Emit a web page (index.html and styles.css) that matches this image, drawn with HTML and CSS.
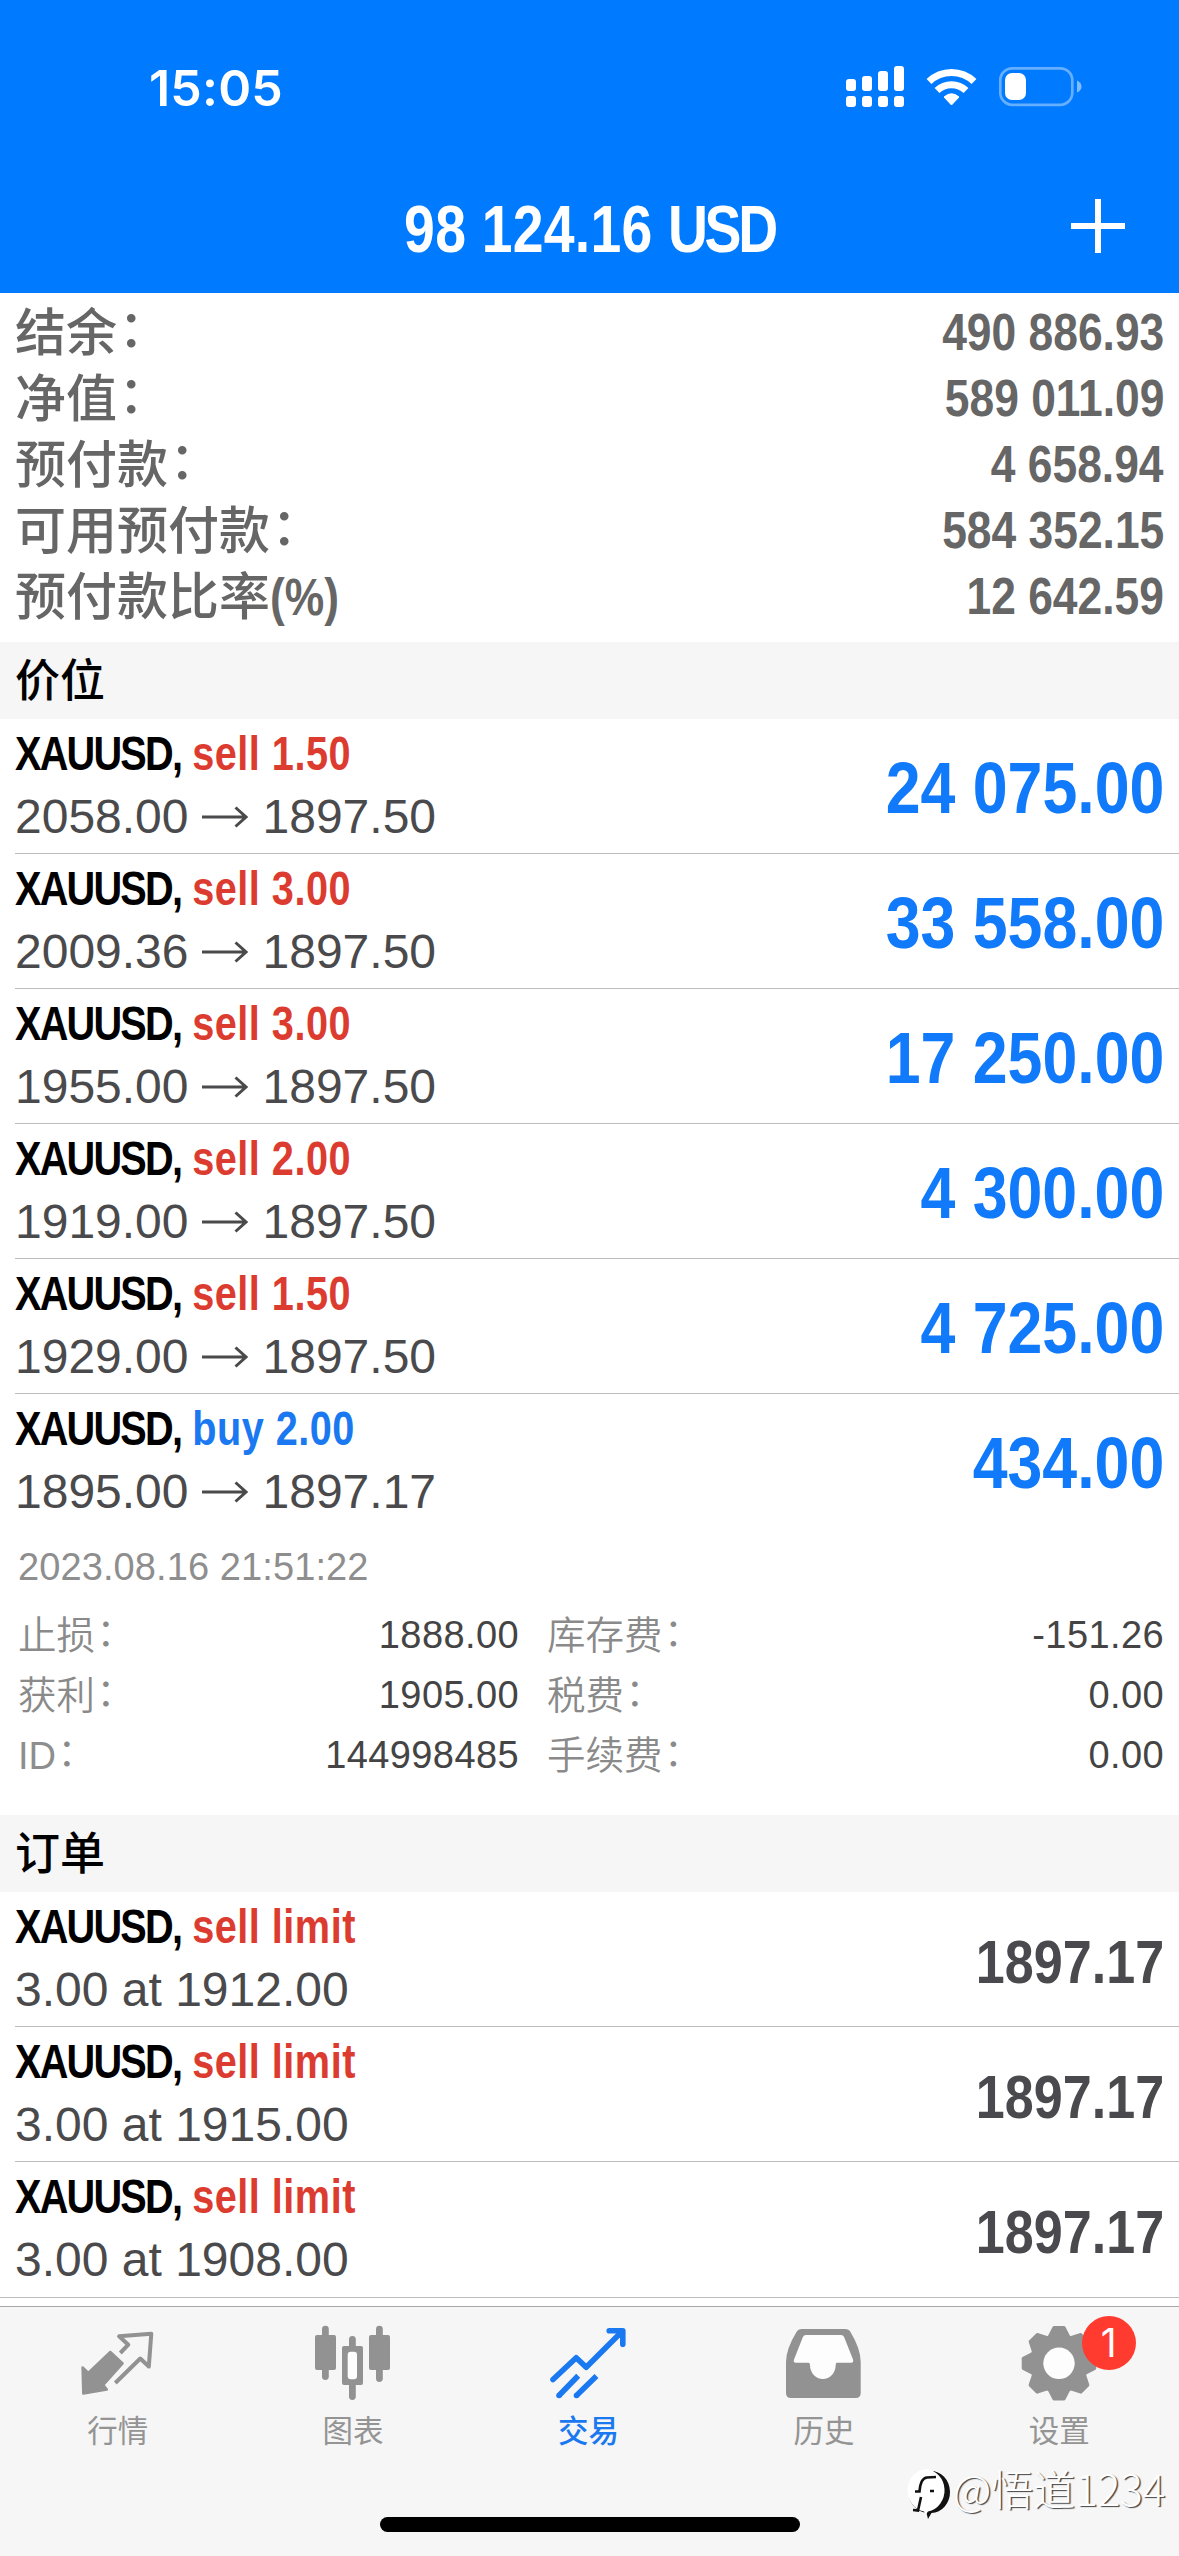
FILE: index.html
```html
<!DOCTYPE html>
<html lang="zh-CN">
<head>
<meta charset="utf-8">
<title>交易</title>
<link rel="stylesheet" href="styles.css">
</head>
<body>
<div class="screen">
  <header class="header">
    <div class="status">
      <span class="clock">15:05</span>
      <svg class="status-icons" viewBox="846 66 236 44" width="236" height="44">
        <g fill="#fff">
          <rect x="846" y="80" width="10" height="12" rx="3"/>
          <rect x="862" y="77" width="10" height="15" rx="3"/>
          <rect x="878" y="72" width="10" height="20" rx="3"/>
          <rect x="894" y="67" width="10" height="25" rx="3"/>
          <rect x="846" y="97" width="10" height="11" rx="3"/>
          <rect x="862" y="97" width="10" height="11" rx="3"/>
          <rect x="878" y="97" width="10" height="11" rx="3"/>
          <rect x="894" y="97" width="10" height="11" rx="3"/>
          <path d="M944 98 Q951.500 91.500 959 98 L951.500 106 Z" stroke="#fff" stroke-width="1" stroke-linejoin="round"/>
          <rect x="1005" y="74" width="21" height="27" rx="7"/>
        </g>
        <g fill="none" stroke="#fff" stroke-width="7">
          <path d="M929 82.500 A32.500 32.500 0 0 1 974 82.500"/>
          <path d="M937 91.500 A21 21 0 0 1 966 91.500"/>
        </g>
        <rect x="1000.300" y="69.300" width="72" height="36.500" rx="12" fill="none" stroke="#fff" stroke-opacity=".4" stroke-width="2.700"/>
        <path d="M1077 81.500 Q1081.500 83.500 1081.500 87.500 Q1081.500 91.500 1077 93.500 Z" fill="#fff" fill-opacity=".5"/>
      </svg>
    </div>
    <div class="titlebar">
      <h1 class="title"><span class="amount">98 124.16</span> <span class="currency">USD</span></h1>
      <svg class="add" viewBox="0 0 54 54" width="54" height="54"><path d="M27 0V54M0 27H54" stroke="#fff" stroke-width="6"/></svg>
    </div>
  </header>

  <section class="summary">
    <div class="sum-row"><span class="sum-label">结余<i class="colon">：</i></span><b class="sum-value">490 886.93</b></div>
    <div class="sum-row"><span class="sum-label">净值<i class="colon">：</i></span><b class="sum-value">589 011.09</b></div>
    <div class="sum-row"><span class="sum-label">预付款<i class="colon">：</i></span><b class="sum-value">4 658.94</b></div>
    <div class="sum-row"><span class="sum-label">可用预付款<i class="colon">：</i></span><b class="sum-value">584 352.15</b></div>
    <div class="sum-row"><span class="sum-label">预付款比率<i class="percent">(%)</i></span><b class="sum-value">12 642.59</b></div>
  </section>

  <h2 class="section">价位</h2>
  <div class="list">
    <div class="row"><div class="deal"><p class="name"><span class="sym">XAUUSD,</span> <span class="sell">sell 1.50</span></p><p class="prices">2058.00<svg class="arrow" viewBox="0 0 46 22" width="46" height="22"><path d="M0 11H44M33.500 1.500L44 11L33.500 20.500"/></svg>1897.50</p></div><b class="profit">24 075.00</b></div>
    <div class="row"><div class="deal"><p class="name"><span class="sym">XAUUSD,</span> <span class="sell">sell 3.00</span></p><p class="prices">2009.36<svg class="arrow" viewBox="0 0 46 22" width="46" height="22"><path d="M0 11H44M33.500 1.500L44 11L33.500 20.500"/></svg>1897.50</p></div><b class="profit">33 558.00</b></div>
    <div class="row"><div class="deal"><p class="name"><span class="sym">XAUUSD,</span> <span class="sell">sell 3.00</span></p><p class="prices">1955.00<svg class="arrow" viewBox="0 0 46 22" width="46" height="22"><path d="M0 11H44M33.500 1.500L44 11L33.500 20.500"/></svg>1897.50</p></div><b class="profit">17 250.00</b></div>
    <div class="row"><div class="deal"><p class="name"><span class="sym">XAUUSD,</span> <span class="sell">sell 2.00</span></p><p class="prices">1919.00<svg class="arrow" viewBox="0 0 46 22" width="46" height="22"><path d="M0 11H44M33.500 1.500L44 11L33.500 20.500"/></svg>1897.50</p></div><b class="profit">4 300.00</b></div>
    <div class="row"><div class="deal"><p class="name"><span class="sym">XAUUSD,</span> <span class="sell">sell 1.50</span></p><p class="prices">1929.00<svg class="arrow" viewBox="0 0 46 22" width="46" height="22"><path d="M0 11H44M33.500 1.500L44 11L33.500 20.500"/></svg>1897.50</p></div><b class="profit">4 725.00</b></div>
    <div class="row open"><div class="deal"><p class="name"><span class="sym">XAUUSD,</span> <span class="buy">buy 2.00</span></p><p class="prices">1895.00<svg class="arrow" viewBox="0 0 46 22" width="46" height="22"><path d="M0 11H44M33.500 1.500L44 11L33.500 20.500"/></svg>1897.17</p></div><b class="profit">434.00</b></div>
  </div>

  <div class="detail">
    <p class="date">2023.08.16 21:51:22</p>
    <div class="facts">
      <span class="key">止损<i class="colon">：</i></span><span class="val">1888.00</span>
      <span class="key">库存费<i class="colon">：</i></span><span class="val">-151.26</span>
      <span class="key">获利<i class="colon">：</i></span><span class="val">1905.00</span>
      <span class="key">税费<i class="colon">：</i></span><span class="val">0.00</span>
      <span class="key"><span class="latin">ID</span><i class="colon">：</i></span><span class="val">144998485</span>
      <span class="key">手续费<i class="colon">：</i></span><span class="val">0.00</span>
    </div>
  </div>

  <h2 class="section">订单</h2>
  <div class="list orders">
    <div class="row"><div class="deal"><p class="name"><span class="sym">XAUUSD,</span> <span class="sell">sell limit</span></p><p class="prices">3.00 at 1912.00</p></div><b class="quote">1897.17</b></div>
    <div class="row"><div class="deal"><p class="name"><span class="sym">XAUUSD,</span> <span class="sell">sell limit</span></p><p class="prices">3.00 at 1915.00</p></div><b class="quote">1897.17</b></div>
    <div class="row last"><div class="deal"><p class="name"><span class="sym">XAUUSD,</span> <span class="sell">sell limit</span></p><p class="prices">3.00 at 1908.00</p></div><b class="quote">1897.17</b></div>
  </div>

  <nav class="tabs">
    <a class="tab">
      <svg viewBox="57.700 2318 120 86" width="120" height="86">
        <path d="M82.300 2367.500L88 2373L110 2352L122.300 2363.500L103 2385L106.500 2389.500L83 2393.500Z" fill="#929292" stroke="#929292" stroke-width="2.500" stroke-linejoin="round"/>
        <path d="M120 2353L128 2344.700L118.800 2336.300L151 2333.700L148.500 2366.500L140 2358.500L115 2383" fill="none" stroke="#929292" stroke-width="4" stroke-linejoin="round"/>
      </svg>
      <span>行情</span>
    </a>
    <a class="tab">
      <svg viewBox="293 2318 120 86" width="120" height="86">
        <g fill="#929292">
          <rect x="315" y="2335" width="21" height="35" rx="2"/><rect x="322" y="2325.700" width="6.800" height="54.300" rx="3.400"/>
          <rect x="342" y="2346" width="21" height="39" rx="2"/><rect x="349" y="2336" width="6.800" height="64" rx="3.400"/>
          <rect x="369" y="2335" width="21" height="35" rx="2"/><rect x="376" y="2325.700" width="6.800" height="56.300" rx="3.400"/>
        </g>
        <rect x="347.700" y="2351.700" width="9.300" height="27.600" rx="3" fill="#fdfdfd"/>
      </svg>
      <span>图表</span>
    </a>
    <a class="tab active">
      <svg viewBox="528.500 2318 120 86" width="120" height="86">
        <g fill="none" stroke="#1a78f0" stroke-width="5.600" stroke-linejoin="round">
          <path d="M553.500 2379.500L576.700 2357.700L586.700 2367.300L622 2332" stroke-linecap="round"/>
          <path d="M609.700 2330.800H623.300V2344.300" stroke-linecap="round"/>
          <path d="M578.700 2375.700L559.500 2395.500M597 2376L577 2395.500"/>
        </g>
        <circle cx="559.500" cy="2395.500" r="2.800" fill="#1a78f0"/><circle cx="577" cy="2395.500" r="2.800" fill="#1a78f0"/>
      </svg>
      <span>交易</span>
    </a>
    <a class="tab">
      <svg viewBox="764 2318 120 86" width="120" height="86">
        <path d="M802 2329H845Q849 2329 850.500 2332Q860.700 2349 860.700 2362V2393Q860.700 2398 855.700 2398H791Q786 2398 786 2393V2362Q786 2349 796.500 2332Q798 2329 802 2329Z" fill="#929292"/>
        <path d="M806 2335H841Q843.500 2335 844.500 2338L853 2359.500Q854 2362.700 851 2362.700H837Q835.700 2362.700 835.700 2365A12.850 14 0 0 1 810 2365Q810 2362.700 808.500 2362.700H796Q793 2362.700 794 2359.500L802.500 2338Q803.500 2335 806 2335Z" fill="#fdfdfd"/>
      </svg>
      <span>历史</span>
    </a>
    <a class="tab">
      <svg viewBox="999.400 2318 120 86" width="120" height="86">
        <g fill="#929292" stroke="#929292" stroke-width="3" stroke-linejoin="round" transform="translate(1059.400 2363.300)">
          <circle r="28"/>
          <path d="M-9.500 -27L-5 -35.800H5L9.500 -27Z"/>
          <path d="M-9.500 -27L-5 -35.800H5L9.500 -27Z" transform="rotate(45)"/>
          <path d="M-9.500 -27L-5 -35.800H5L9.500 -27Z" transform="rotate(90)"/>
          <path d="M-9.500 -27L-5 -35.800H5L9.500 -27Z" transform="rotate(135)"/>
          <path d="M-9.500 -27L-5 -35.800H5L9.500 -27Z" transform="rotate(180)"/>
          <path d="M-9.500 -27L-5 -35.800H5L9.500 -27Z" transform="rotate(225)"/>
          <path d="M-9.500 -27L-5 -35.800H5L9.500 -27Z" transform="rotate(270)"/>
          <path d="M-9.500 -27L-5 -35.800H5L9.500 -27Z" transform="rotate(315)"/>
        </g>
        <circle cx="1059.400" cy="2363.300" r="15.700" fill="#fdfdfd"/>
      </svg>
      <span>设置</span>
      <b class="badge">1</b>
    </a>
    <div class="home"></div>
    <div class="watermark">
      <svg viewBox="0 0 46 52" width="46" height="52">
        <path d="M24 3A19 21 0 0 1 25 45L21.500 51L20 45A20 21 0 0 1 24 3Z" fill="#111" transform="translate(1.500 1)"/>
        <path d="M21 2A20.500 21.500 0 0 1 23 44.500L20.500 48L19 44.500A20.500 21.500 0 0 1 21 2Z" fill="#fff"/>
        <path d="M8 43L13 43.500L16 30M10 24.500H14.500Q15.500 11 22 10.500L31 10M25 24H29" fill="none" stroke="#111" stroke-width="2.600"/>
      </svg>
      <span>@悟道1234</span>
    </div>
  </nav>
</div>
</body>
</html>
```
FILE: styles.css
```css
* { box-sizing: border-box; }

body {
  margin: 0;
  background: #fff;
  font-family: "Liberation Sans", "Noto Sans CJK SC", sans-serif;
  color: #000;
}

h1, h2, p { margin: 0; }
i { font-style: normal; }
svg { display: block; flex: none; }

.screen {
  width: 1179px;
  height: 2556px;
  display: flex;
  flex-direction: column;
  overflow: hidden;
}

/* header */
.header {
  height: 293px;
  flex: none;
  background: #007aff;
  color: #fff;
}
.status {
  height: 174px;
  padding: 0 97px 0 149px;
  display: flex;
  align-items: center;
  justify-content: space-between;
}
.clock {
  padding-top: 2px;
  font: 600 50px/60px Inter, sans-serif;
  letter-spacing: 0.2px;
}
.titlebar {
  height: 119px;
  padding: 0 54px 15px;
  display: grid;
  grid-template-columns: 54px 1fr 54px;
  align-items: center;
}
.title {
  grid-column: 2;
  padding-top: 5px;
  text-align: center;
  font-size: 67px;
  line-height: 80px;
  white-space: nowrap;
  transform: scaleX(.826);
}
.amount { letter-spacing: .3px; }
.currency { letter-spacing: -4px; }

/* account summary */
.summary {
  height: 349px;
  flex: none;
  padding: 7px 15px 12px;
  color: #666;
}
.sum-row {
  height: 66px;
  display: flex;
  justify-content: space-between;
}
.sum-label {
  font: 500 51px/58px "Noto Sans CJK SC", sans-serif;
}
.colon {
  display: inline-block;
  transform: translate(.03em, -.07em);
}
.percent {
  display: inline-block;
  font: bold 51px/58px "Liberation Sans", sans-serif;
  transform: scaleX(.87);
  transform-origin: left;
}
.sum-value {
  font-size: 51px;
  line-height: 66px;
  transform: scaleX(.87);
  transform-origin: right;
}

/* section headings */
.section {
  height: 77px;
  flex: none;
  padding-left: 15px;
  background: #f6f6f6;
  font: 500 45px/71px "Noto Sans CJK SC", sans-serif;
}

/* positions and orders */
.list { padding-left: 15px; flex: none; }
.row {
  height: 135px;
  padding: 4px 15px 0 0;
  border-bottom: 1px solid #bcbcc0;
  display: flex;
  justify-content: space-between;
}
.row.open { border-bottom-color: transparent; }
.row.last {
  height: 136px;
  margin-left: -15px;
  padding-left: 15px;
}
.name {
  font-size: 49px;
  font-weight: bold;
  line-height: 61px;
  white-space: nowrap;
  transform: scaleX(.81);
  transform-origin: left;
}
.sym { letter-spacing: -2.200px; }
.sell, .buy { letter-spacing: .6px; }
.sell { color: #dc3c30; }
.buy { color: #1a78f0; }
.prices {
  display: flex;
  align-items: center;
  font-size: 48px;
  line-height: 66px;
  color: #4a4a4c;
}
.arrow {
  margin: 0 15px 0 13px;
  fill: none;
  stroke: #4a4a4c;
  stroke-width: 3;
}
.profit, .quote {
  line-height: 131px;
  white-space: nowrap;
  transform-origin: right;
}
.profit {
  font-size: 72px;
  color: #107afa;
  transform: scaleX(.87);
}
.quote {
  font-size: 62px;
  color: #4a4a4e;
  transform: scaleX(.84);
}

/* expanded position */
.detail {
  height: 286px;
  flex: none;
  padding: 0 15px 0 18px;
  font-size: 38px;
}
.date { line-height: 76px; letter-spacing: .1px; color: #8e8e8e; }
.facts {
  display: grid;
  grid-template-columns: 160px 341px 190px 1fr;
  grid-auto-rows: 60px;
  line-height: 60px;
}
.key {
  font: 350 38.500px/55px "Noto Sans CJK SC", sans-serif;
  color: #8a8a8a;
}
.latin { font: 38px "Liberation Sans", sans-serif; color: #8e8e8e; }
.val { text-align: right; letter-spacing: .4px; color: #444; }
.key:nth-child(4n + 3) { padding-left: 28px; }

/* tab bar */
.tabs {
  position: relative;
  height: 250px;
  flex: none;
  margin-top: auto;
  padding-right: 2px;
  border-top: 1px solid #a8a8a8;
  background: #f6f6f6;
  display: grid;
  grid-template-columns: repeat(5, 1fr);
}
.tab {
  position: relative;
  padding-top: 11px;
  display: flex;
  flex-direction: column;
  align-items: center;
  font: 400 30.500px/44px "Noto Sans CJK SC", sans-serif;
  color: #949494;
}
.tab span { margin-top: 3px; }
.tab.active { color: #1a78f0; font-weight: 500; }
.badge {
  position: absolute;
  left: 140px;
  top: 9px;
  width: 54px;
  height: 54px;
  border-radius: 50%;
  background: #ff3b30;
  color: #fff;
  font: 400 39px/54px Inter, sans-serif;
  text-align: center;
}
.home {
  position: absolute;
  left: 380px;
  top: 210px;
  width: 420px;
  height: 15px;
  border-radius: 8px;
  background: #000;
}
.watermark {
  position: absolute;
  left: 905px;
  top: 160px;
  display: flex;
  gap: 2px;
  font: 300 42px/42px "Noto Sans CJK SC", sans-serif;
  white-space: nowrap;
  color: #fff;
  text-shadow: 1.500px 1px 1px #444;
}
```
